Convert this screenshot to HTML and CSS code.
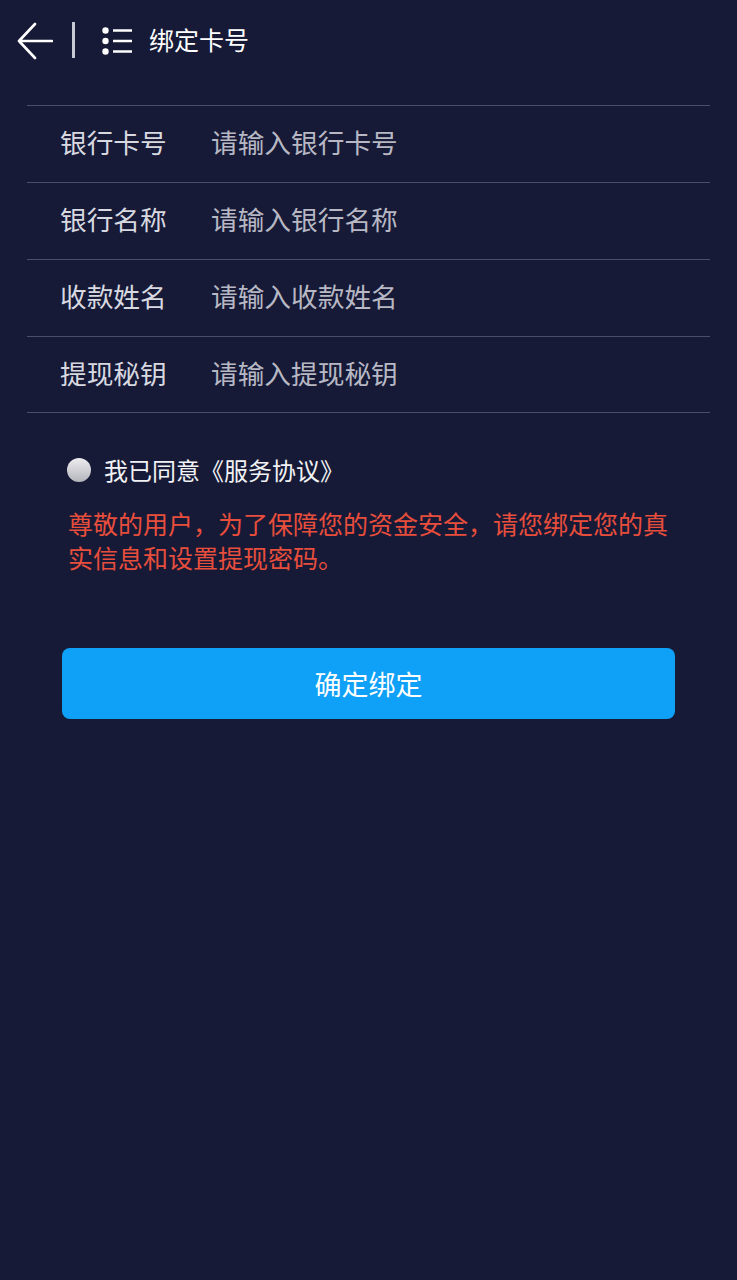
FILE: index.html
```html
<!DOCTYPE html>
<html lang="zh-CN">
<head>
    <meta charset="UTF-8">
    <meta name="viewport" content="width=device-width, initial-scale=1.0">
    <title>绑定卡号</title>
    <link rel="stylesheet" href="styles.css">
</head>
<body>
    <header class="topbar">
        <a class="back" href="#">
            <svg width="36" height="38" viewBox="0 0 36 38">
                <path d="M18 2 L2 19 L18 36 M2 19 H35" fill="none" stroke="#fff" stroke-width="2.6" stroke-linecap="round" stroke-linejoin="round"/>
            </svg>
        </a>
        <span class="divider"></span>
        <span class="menu">
            <svg width="31" height="28" viewBox="0 0 31 28">
                <circle cx="3.5" cy="3.5" r="3.2" fill="#fff"/>
                <circle cx="3.5" cy="14" r="3.2" fill="#fff"/>
                <circle cx="3.5" cy="24.5" r="3.2" fill="#fff"/>
                <path d="M11 3.5 H30 M11 14 H30 M11 24.5 H30" stroke="#fff" stroke-width="2.6"/>
            </svg>
        </span>
        <h1 class="title">绑定卡号</h1>
    </header>

    <form class="card-form">
        <div class="field">
            <label for="cardNo">银行卡号</label>
            <input type="text" id="cardNo" placeholder="请输入银行卡号">
        </div>
        <div class="field">
            <label for="bankName">银行名称</label>
            <input type="text" id="bankName" placeholder="请输入银行名称">
        </div>
        <div class="field">
            <label for="payee">收款姓名</label>
            <input type="text" id="payee" placeholder="请输入收款姓名">
        </div>
        <div class="field">
            <label for="secret">提现秘钥</label>
            <input type="text" id="secret" placeholder="请输入提现秘钥">
        </div>

        <div class="agree">
            <span class="radio"></span>
            <span>我已同意《服务协议》</span>
        </div>
        <p class="notice">尊敬的用户，为了保障您的资金安全，请您绑定您的真实信息和设置提现密码。</p>

        <button type="button" class="submit">确定绑定</button>
    </form>
</body>
</html>
```

FILE: styles.css
```css
body {
    margin: 0;
    min-height: 1280px;
    background-color: #161a36;
    font-family: "Noto Sans CJK SC", "Noto Sans", sans-serif;
    color: #fff;
}

.topbar {
    display: flex;
    align-items: center;
    height: 80px;
    padding-left: 17px;
}

.back {
    display: flex;
    margin-top: 1px;
}

.divider {
    width: 3px;
    height: 36px;
    margin-left: 19px;
    background-color: #c9c9d3;
}

.menu {
    display: flex;
    margin-left: 27px;
    margin-top: 1px;
}

.title {
    margin: 0 0 3px 16px;
    font-size: 25px;
    font-weight: normal;
    color: #fff;
}

.card-form {
    margin: 25px 27px 0;
}

.field {
    display: flex;
    align-items: center;
    box-sizing: border-box;
    height: 77px;
    padding-bottom: 5px;
    border-top: 1.5px solid #4a4e69;
}

.field:nth-child(4) {
    border-bottom: 1.5px solid #4a4e69;
}

.field label {
    width: 151px;
    padding-left: 33px;
    font-size: 26.7px;
    color: #d8d9e0;
}

.field input {
    flex: 1;
    background: transparent;
    border: none;
    outline: none;
    padding: 0;
    font-family: inherit;
    font-size: 26.7px;
    color: #fff;
}

.field input::placeholder {
    color: #b7b8c4;
}

.agree {
    display: flex;
    align-items: center;
    margin: 39px 0 0 40px;
    font-size: 24px;
    color: #f2f2f5;
}

.radio {
    width: 24px;
    height: 24px;
    margin-right: 13px;
    border-radius: 50%;
    background: linear-gradient(#ededf0, #b4b4bc);
}

.notice {
    max-width: 605px;
    margin: 19px 0 0 41px;
    font-size: 25px;
    line-height: 34px;
    color: #e84e3c;
}

.submit {
    display: block;
    width: 613px;
    height: 71px;
    margin: 74px 0 0 35px;
    border: none;
    border-radius: 8px;
    background-color: #0fa0f7;
    color: #fff;
    font-family: inherit;
    font-size: 27px;
    cursor: pointer;
}
```
